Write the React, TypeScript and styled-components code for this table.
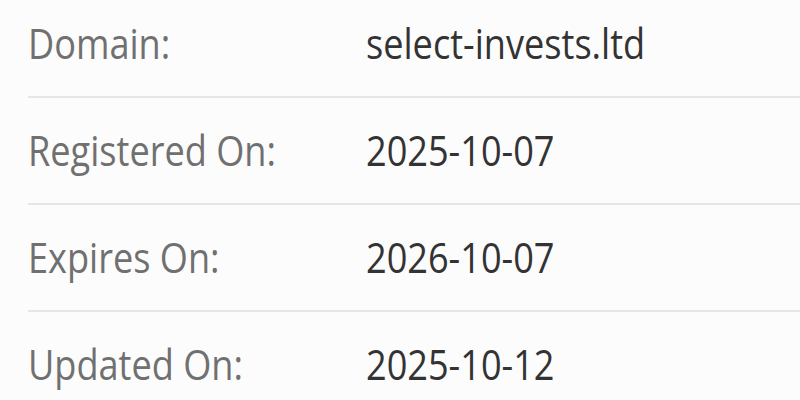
import React from "react";
import styled, { createGlobalStyle } from "styled-components";

const Global = createGlobalStyle`
  html, body { margin: 0; padding: 0; background: #fcfcfc; overflow: hidden; }
  body { font-family: "Open Sans", "Noto Sans", sans-serif; }
`;

const Page = styled.div`
  width: 800px;
  height: 400px;
  overflow: hidden;
  background: #fcfcfc;
`;

const Table = styled.div`
  margin: -9px 0 0 28px;
  display: flex;
  flex-direction: column;
`;

const Row = styled.div`
  display: grid;
  grid-template-columns: 338px 1fr;
  padding: 20px 0 22px;
  border-bottom: 2px solid #e6e6e6;
  font-size: 42px;
  line-height: 63px;
`;

const Text = styled.span<{ $tone: "label" | "value" }>`
  display: inline-block;
  white-space: nowrap;
  color: ${(p) => (p.$tone === "label" ? "#707070" : "#333333")};
  transform: scaleX(0.86);
  transform-origin: left center;
`;

const rows = [
  ["Domain:", "select-invests.ltd"],
  ["Registered On:", "2025-10-07"],
  ["Expires On:", "2026-10-07"],
  ["Updated On:", "2025-10-12"],
];

export default function App() {
  return (
    <Page>
      <Global />
      <Table>
        {rows.map(([k, v]) => (
          <Row key={k}>
            <div>
              <Text $tone="label">{k}</Text>
            </div>
            <div>
              <Text $tone="value">{v}</Text>
            </div>
          </Row>
        ))}
      </Table>
    </Page>
  );
}
